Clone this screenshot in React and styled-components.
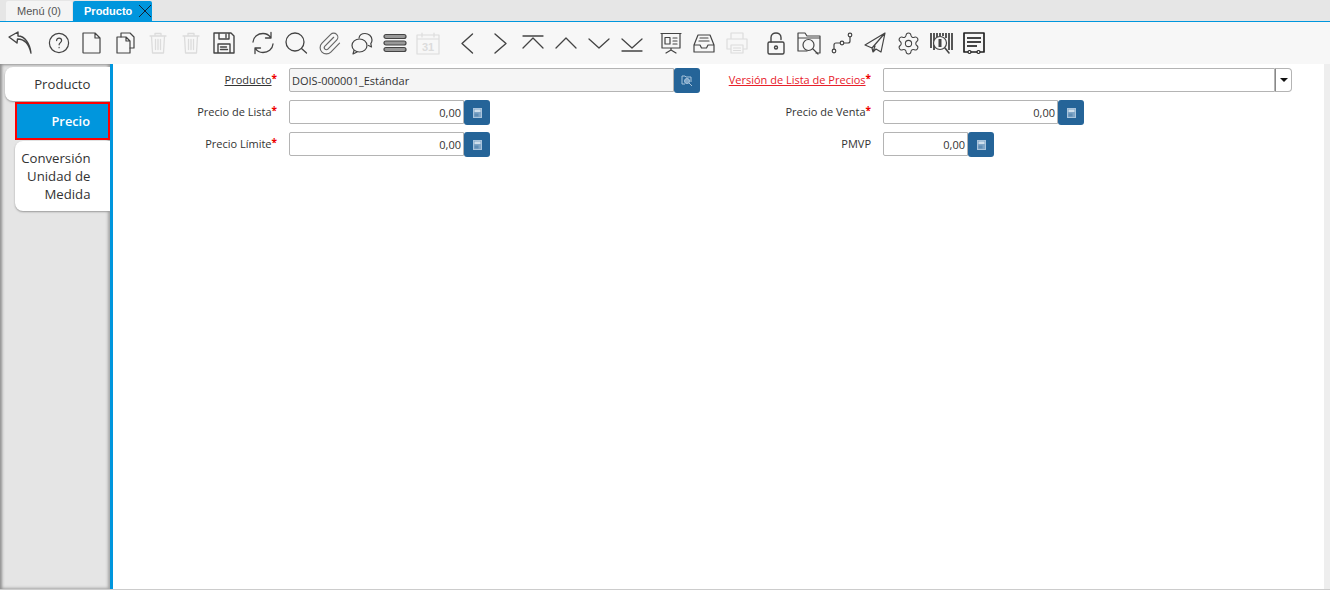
import React from "react";
import styled, { createGlobalStyle } from "styled-components";
import { Paperclip, Settings } from "lucide-react";

const GlobalStyle = createGlobalStyle`
  html, body {
    margin: 0;
    padding: 0;
    height: 100%;
    overflow: hidden;
    background: #fff;
  }
  #root {
    height: 100%;
  }
`;

const Page = styled.div`
  width: 1330px;
  height: 590px;
  display: flex;
  flex-direction: column;
  font-family: "Open Sans", sans-serif;
  color: #333;
`;

const TabBar = styled.div`
  height: 21px;
  flex: none;
  display: flex;
  align-items: flex-end;
  gap: 1px;
  padding-left: 6px;
  background: #e6e6e6;
  border-bottom: 1px solid #0096dd;
  font-family: "Liberation Sans", sans-serif;
  font-size: 11px;
`;

const WindowTab = styled.div`
  height: 20px;
  box-sizing: border-box;
  display: flex;
  align-items: center;
  background: ${props => (props.active ? "#0096dd" : "#f4f4f4")};
  color: ${props => (props.active ? "#fff" : "#555")};
  font-weight: ${props => (props.active ? 700 : 400)};
  padding: ${props => (props.active ? "0 0 0 11px" : "0 11px")};
  border-radius: 2px 2px 0 0;
  svg {
    margin-left: 6px;
  }
`;

const Toolbar = styled.div`
  height: 42px;
  flex: none;
  display: flex;
  align-items: center;
  gap: 6px;
  padding-left: 3.5px;
  background: #f7f7f7;
`;

const ToolGroup = styled.div`
  display: flex;
`;

const ToolButton = styled.div`
  width: 33px;
  height: 42px;
  display: flex;
  align-items: center;
  justify-content: center;
  color: ${props => (props.disabled ? "#dcdcdc" : "#444")};
`;

const Body = styled.div`
  flex: 1;
  display: flex;
  min-height: 0;
  border-bottom: 1px solid #ccc;
`;

const Rail = styled.div`
  width: 110px;
  flex: none;
  box-sizing: border-box;
  padding-top: 3px;
  background: #e5e5e5;
  box-shadow: inset 3px 2px 3px -1px #8f8f8f, inset -3px -2px 3px -1px #a5a5a5;
`;

const RailTab = styled.div`
  box-sizing: border-box;
  margin-left: ${props => (props.first ? "5px" : "15px")};
  margin-bottom: 1px;
  padding: 8px ${props => (props.active ? "18px" : "19.5px")} 8px 0;
  text-align: right;
  font-size: ${props => (props.active ? "12.8px" : "13.2px")};
  line-height: 18px;
  background: ${props => (props.active ? "#0096dd" : "#fff")};
  color: ${props => (props.active ? "#fff" : "#333")};
  font-weight: ${props => (props.active ? 600 : 400)};
  border: ${props => (props.active ? "2px solid #f00" : "0")};
  border-radius: ${props => (props.active ? "0" : "8px 0 0 8px")};
  box-shadow: ${props => (props.active ? "none" : "0 1px 2px #999")};
`;

const Content = styled.div`
  flex: 1;
  border-left: 3px solid #0096dd;
  background: #fff;
  display: flex;
`;

const Form = styled.div`
  flex: 1;
  align-self: flex-start;
  display: grid;
  grid-template-columns: 164px 423px 171px 421px;
  row-gap: 8px;
  padding-top: 4px;
`;

const Label = styled.div`
  height: 24px;
  box-sizing: border-box;
  padding-bottom: 2px;
  display: flex;
  align-items: center;
  justify-content: flex-end;
  font-size: 11px;
  color: #333;
  span {
    color: ${props => (props.error ? "#e8202a" : "inherit")};
    text-decoration: ${props => (props.link ? "underline" : "none")};
  }
  b {
    color: #e00;
    font-size: 10px;
    font-weight: 700;
    position: relative;
    top: -1px;
  }
`;

const Field = styled.div`
  display: flex;
  height: 24px;
  margin-left: 12px;
  width: ${props => props.width || "auto"};
`;

const Input = styled.div`
  flex: 1;
  box-sizing: border-box;
  height: 24px;
  display: flex;
  align-items: center;
  justify-content: ${props => (props.number ? "flex-end" : "flex-start")};
  padding: ${props => (props.number ? "0 2px 0 0" : "0 0 0 2px")};
  border: 1px solid #b4b4b4;
  border-radius: 2px 0 0 2px;
  background: ${props => (props.readOnly ? "#f5f5f5" : "#fff")};
  font-size: 11px;
  color: #333;
`;

const ActionButton = styled.div`
  width: 26px;
  height: 25px;
  flex: none;
  display: flex;
  align-items: center;
  justify-content: center;
  background: #256498;
  border-radius: 3px;
`;

const DropButton = styled.div`
  width: 17px;
  height: 24px;
  flex: none;
  box-sizing: border-box;
  display: flex;
  align-items: center;
  justify-content: center;
  background: #fff;
  border: 1px solid #b4b4b4;
  border-left: 1px solid #888;
  border-radius: 0 4px 4px 0;
  &::after {
    content: "";
    border-left: 4px solid transparent;
    border-right: 4px solid transparent;
    border-top: 4px solid #111;
  }
`;

const Scrollbar = styled.div`
  width: 6px;
  flex: none;
  background: #eee;
`;

const Ico = ({ children, sw = 1.4 }) => (
  <svg
    width={26}
    height={26}
    viewBox="0 0 26 26"
    fill="none"
    stroke="currentColor"
    strokeWidth={sw}
    strokeLinecap="round"
    strokeLinejoin="round"
  >
    {children}
  </svg>
);

const icons = {
  back: <Ico><path d="M11 2 2 7l8 6 .5-4C17 9 22 14 24 23 23 14 18 6 11 6z" /></Ico>,
  help: (
    <Ico sw={1.2}>
      <circle cx="13" cy="13" r="9.600" />
      <path d="M10.600 10.600c0-3.200 5-3.200 5 0 0 2-2.500 2-2.500 4.200M13.100 17.400v.3" />
    </Ico>
  ),
  doc: <Ico sw={1.2}><path d="M4 3h12l5 5v14.500q0 .5-.5.5h-16q-.5 0-.5-.5zM16 3v5h5" /></Ico>,
  copy: (
    <Ico sw={1.2}>
      <path d="M9 7V3h9l4 4v11h-4" />
      <path d="M5 7h9l4 4v12H5zM14 7v4h4" />
    </Ico>
  ),
  trash: (
    <Ico sw={1.3}>
      <path d="M5 6h16M10 6V3.500h6V6M6.500 6l1 17h11l1-17M10.500 9.500v10M13 9.500v10M15.500 9.500v10" />
    </Ico>
  ),
  save: (
    <Ico sw={1.4}>
      <path d="M3 3h17l3 3v17H3zM8 3v6h10V3M15 4.500v3M7 23v-9h12v9M9.500 17h6M9.500 19.500h7" />
    </Ico>
  ),
  refresh: (
    <Ico sw={1.3}>
      <path d="M3 12C3.500 6.500 8 3.500 13 3.500c3.500 0 6 1.500 7.500 4M21 2.500v5.500h-5.500" />
      <path d="M23 14c-.5 5.500-5 8.500-10 8.500-3.500 0-6-1.500-7.500-4M5 23.500V18h5.500" />
    </Ico>
  ),
  search: <Ico sw={1.3}><circle cx="12" cy="12" r="9" /><path d="m18.500 18.500 5 4.500" /></Ico>,
  clip: <Paperclip size={25} strokeWidth={1.1} color="#666" />,
  chat: (
    <Ico sw={1.2}>
      <path d="M10 8c.5-3 3-4.500 6-4.500 3.500 0 7 2.500 7 6.500 0 1.500-.5 2.700-1.200 3.700l.7 3.300-3-1.500" />
      <ellipse cx="10.500" cy="15.500" rx="7.500" ry="6.500" />
      <path d="m5 20.500-1 3.500 4-2" />
    </Ico>
  ),
  list: (
    <Ico sw={1.2}>
      <rect x="2" y="4.500" width="22" height="4" rx="2" fill="#999" />
      <rect x="2" y="11" width="22" height="4" rx="2" fill="#999" />
      <rect x="2" y="17.500" width="22" height="4" rx="2" fill="#999" />
    </Ico>
  ),
  calendar: (
    <Ico sw={1.2}>
      <path d="M2 5h22v19H2zM2 9h22M7 3v4M19 3v4" />
      <text x="13" y="21" textAnchor="middle" fontSize="11" fontFamily="Liberation Sans" fill="currentColor" stroke="none" fontWeight="700">31</text>
    </Ico>
  ),
  prev: <Ico sw={1.4}><path d="M18.500 4 8 13.500l10.500 9.500" /></Ico>,
  next: <Ico sw={1.4}><path d="m8 4 11 9.500L8 23" /></Ico>,
  first: <Ico sw={1.3}><path d="M3 6h20M3 18 13 8l10 10" /></Ico>,
  up: <Ico sw={1.3}><path d="M3 18 13 8l10 10" /></Ico>,
  down: <Ico sw={1.3}><path d="m3 9 10 9L23 9" /></Ico>,
  last: <Ico sw={1.3}><path d="M3 21h20M3 9l10 9 10-9" /></Ico>,
  report: (
    <Ico sw={1.2}>
      <path d="M3 3.500h20M4 3.500V18h18V3.500M13 18v2M8 23l5-3 5 3" />
      <path d="M7 7.500h5v6.500H7zM15 8h4M15 11h4M15 14h4" />
    </Ico>
  ),
  archive: (
    <Ico sw={1.2}>
      <path d="M7 5h12l4 10v7H3v-7zM3 15h6l1.500 3h5l1.500-3h6M9 8h8M8 11h10" />
    </Ico>
  ),
  print: (
    <Ico sw={1.2}>
      <path d="M7 9V3h12v6M7 19H3V9h20v10h-4M7 15h12v8H7zM9.500 18h7M9.500 20.500h7" />
    </Ico>
  ),
  lock: (
    <Ico sw={1.4}>
      <rect x="5" y="12" width="16" height="12" rx="1.500" />
      <path d="M8 12V7.500C8 1.500 18 1.500 18 7.500V9.500" />
      <circle cx="13" cy="17.500" r="1.500" />
    </Ico>
  ),
  folderFind: (
    <Ico sw={1.2}>
      <path d="M2 21V3h7l2 3h13v17h-4M2 8h22M2 21h9" />
      <circle cx="12.500" cy="15" r="5.500" />
      <path d="m17 19 5 5" />
    </Ico>
  ),
  flow: (
    <Ico sw={1.2}>
      <circle cx="5" cy="21" r="1.800" />
      <circle cx="13" cy="13" r="1.800" />
      <circle cx="21" cy="5" r="1.800" />
      <path d="M5 19v-4q0-2 2-2h4M15 13h4q2 0 2-2V7" />
    </Ico>
  ),
  send: (
    <Ico sw={1.2}>
      <path d="M23 3 3 15l7 3zM23 3l-13 15 1 4 3-3 5 3zM11 22l2-6" />
    </Ico>
  ),
  settings: <Settings size={25} strokeWidth={1} />,
  barcode: (
    <Ico sw={1.2}>
      <path d="M3 3v15M6 3v17M9 3v4M12 3v3M15 3v3M18 3v5M21 3v17M24 3v17" strokeWidth="1.800" strokeLinecap="butt" />
      <circle cx="12" cy="13" r="6.500" fill="#f7f7f7" />
      <path d="M12 9v8" strokeWidth="3" strokeLinecap="butt" />
      <path d="m17 18 4 5" strokeWidth="1.600" />
    </Ico>
  ),
  ticket: (
    <Ico sw={1.7}>
      <path d="M3 3h20v19H3z" stroke="#222" />
      <circle cx="8.500" cy="22" r="1.500" fill="#f7f7f7" stroke="#222" strokeWidth="1.200" />
      <circle cx="17.500" cy="22" r="1.500" fill="#f7f7f7" stroke="#222" strokeWidth="1.200" />
      <path d="M6 8h14M6 12h14M6 16h10" strokeWidth="1.800" strokeLinecap="butt" />
    </Ico>
  ),
};

const groups = [
  [["back"]],
  [["help"], ["doc"], ["copy"], ["trash", true], ["trash", true], ["save"]],
  [["refresh"], ["search"], ["clip"], ["chat"], ["list"], ["calendar", true]],
  [["prev"], ["next"], ["first"], ["up"], ["down"], ["last"]],
  [["report"], ["archive"], ["print", true]],
  [["lock"], ["folderFind"], ["flow"], ["send"], ["settings"], ["barcode"], ["ticket"]],
];

const CalcIcon = () => (
  <svg width="9" height="10" viewBox="0 0 9 10">
    <rect x="0.500" y="0.500" width="8" height="9" fill="#7fa5c6" stroke="#a9c4dc" />
    <rect x="1.500" y="1.500" width="6" height="2.500" fill="#cfdfec" />
    <rect x="1.500" y="5.500" width="4" height="3" fill="#5f8db5" />
  </svg>
);

const FindIcon = () => (
  <svg width="12" height="12" viewBox="0 0 12 12" fill="none" stroke="#a9c4dc" strokeWidth="1">
    <path d="M1 1v8h3M1 1h3l1 1h5v5" />
    <circle cx="6" cy="6" r="2.500" fill="#7fa6c8" />
    <path d="m8 8 3 3" />
  </svg>
);

const PriceField = ({ width }) => (
  <Field width={width}>
    <Input number>0,00</Input>
    <ActionButton>
      <CalcIcon />
    </ActionButton>
  </Field>
);

export default function App() {
  return (
    <Page>
      <GlobalStyle />
      <TabBar>
        <WindowTab>Menú (0)</WindowTab>
        <WindowTab active>
          Producto
          <svg width="14" height="14" viewBox="0 0 14 14" stroke="#123" strokeWidth="1">
            <path d="m1 1 12 12M13 1 1 13" />
          </svg>
        </WindowTab>
      </TabBar>
      <Toolbar>
        {groups.map((group, i) => (
          <ToolGroup key={i}>
            {group.map(([name, disabled], j) => (
              <ToolButton key={j} disabled={disabled}>
                {icons[name]}
              </ToolButton>
            ))}
          </ToolGroup>
        ))}
      </Toolbar>
      <Body>
        <Rail>
          <RailTab first>Producto</RailTab>
          <RailTab active>Precio</RailTab>
          <RailTab>
            Conversión
            <br />
            Unidad de
            <br />
            Medida
          </RailTab>
        </Rail>
        <Content>
          <Form>
            <Label link>
              <span>Producto</span>
              <b>*</b>
            </Label>
            <Field>
              <Input readOnly>DOIS-000001_Estándar</Input>
              <ActionButton>
                <FindIcon />
              </ActionButton>
            </Field>
            <Label link error>
              <span>Versión de Lista de Precios</span>
              <b>*</b>
            </Label>
            <Field>
              <Input />
              <DropButton />
            </Field>

            <Label>
              <span>Precio de Lista</span>
              <b>*</b>
            </Label>
            <PriceField width="201px" />
            <Label>
              <span>Precio de Venta</span>
              <b>*</b>
            </Label>
            <PriceField width="201px" />

            <Label>
              <span>Precio Límite</span>
              <b>*</b>
            </Label>
            <PriceField width="201px" />
            <Label>
              <span>PMVP</span>
            </Label>
            <PriceField width="111px" />
          </Form>
          <Scrollbar />
        </Content>
      </Body>
    </Page>
  );
}
